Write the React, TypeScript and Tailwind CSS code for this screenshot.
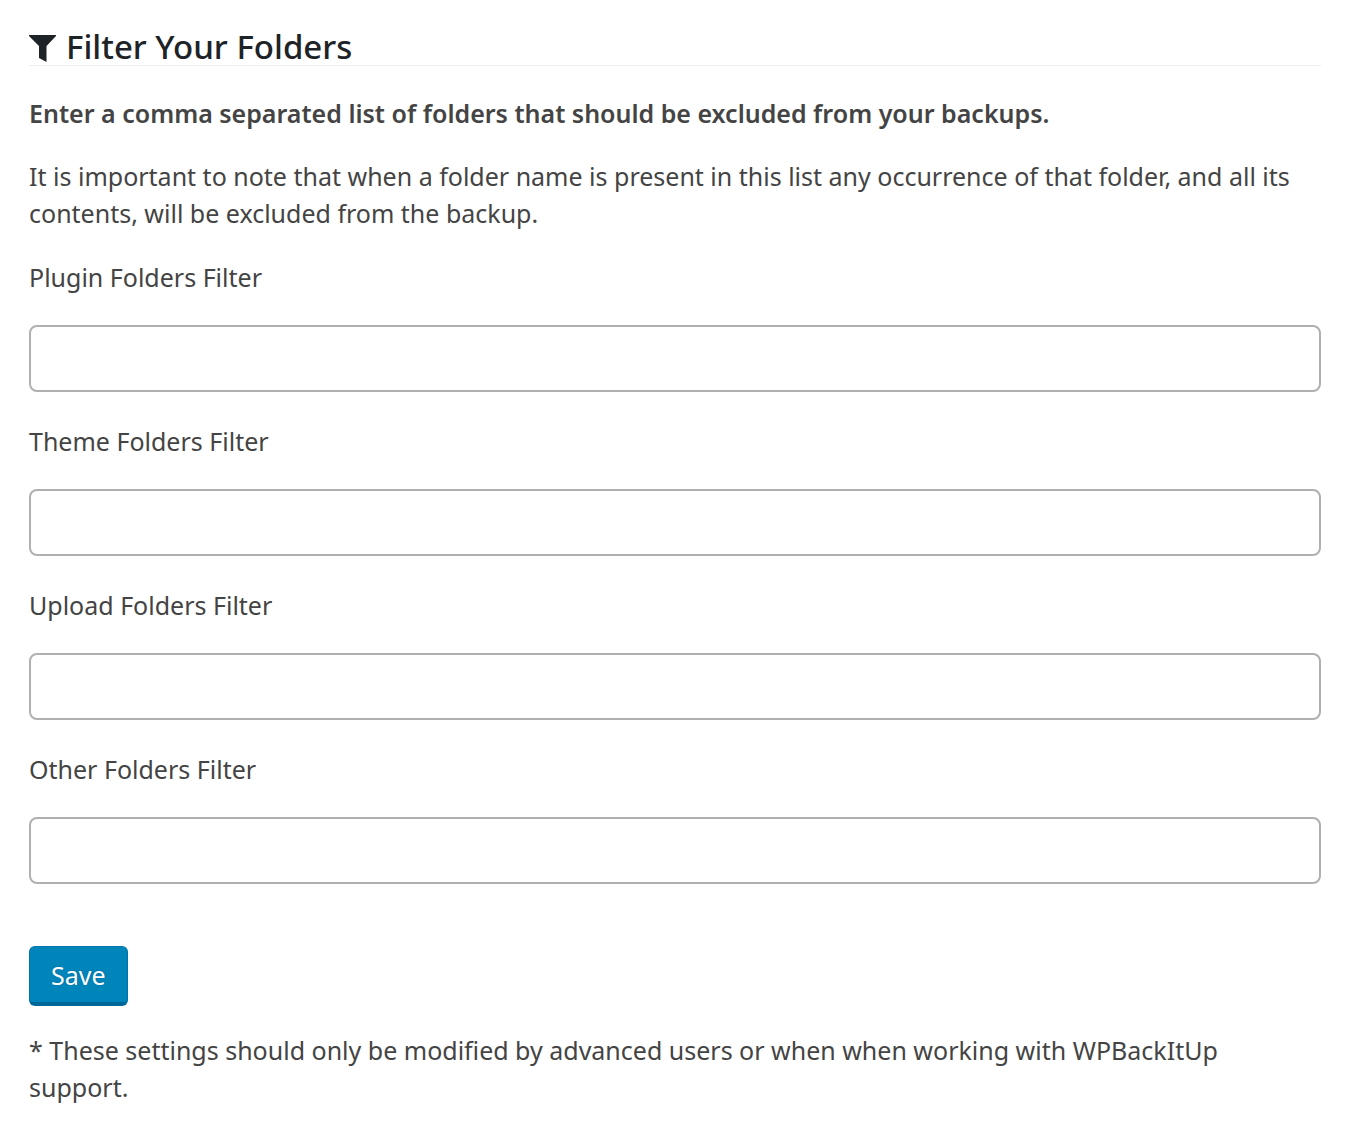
const filters = [
  { id: "plugin-folders", label: "Plugin Folders Filter" },
  { id: "theme-folders", label: "Theme Folders Filter" },
  { id: "upload-folders", label: "Upload Folders Filter" },
  { id: "other-folders", label: "Other Folders Filter" },
];

function FilterIcon() {
  return (
    <svg
      viewBox="0 -4 27 31"
      className="h-[31px] w-[27px]"
      fill="currentColor"
      aria-hidden="true"
    >
      <path d="M0 0h27v1L17.5 11v16L10 23V11L0 1z" />
    </svg>
  );
}

export default function App() {
  return (
    <main className="min-h-screen bg-white px-[29px] pt-7 pb-6 font-['Noto_Sans',sans-serif] text-[25px] leading-[37px] text-[#444]">
      <h2 className="flex items-center gap-2.5 border-b border-[#eee] text-[33px] leading-[37px] font-medium text-[#1d2327]">
        <FilterIcon />
        Filter Your Folders
      </h2>
      <p className="mt-[29px] font-semibold">
        Enter a comma separated list of folders that should be excluded from
        your backups.
      </p>
      <p className="mt-[26px]">
        It is important to note that when a folder name is present in this list
        any occurrence of that folder, and all its contents, will be excluded
        from the backup.
      </p>
      <form onSubmit={(e) => e.preventDefault()}>
        {filters.map(({ id, label }) => (
          <div key={id} className="mt-[27px] mb-[31px]">
            <label htmlFor={id} className="block">
              {label}
            </label>
            <input
              id={id}
              type="text"
              className="mt-[29px] block h-[67px] w-full rounded-lg border-2 border-[#b0b0b0] bg-white px-4 outline-none focus:border-[#007cba]"
            />
          </div>
        ))}
        <button
          type="submit"
          className="mt-[62px] block h-[60px] rounded-md border border-b-4 border-[#0073aa] border-b-[#006799] bg-[#0085ba] px-[21px] pt-0.5 text-white text-shadow-[0_0_2px_#006799]"
        >
          Save
        </button>
      </form>
      <p className="mt-[26px]">
        * These settings should only be modified by advanced users or when when
        working with WPBackItUp support.
      </p>
    </main>
  );
}
